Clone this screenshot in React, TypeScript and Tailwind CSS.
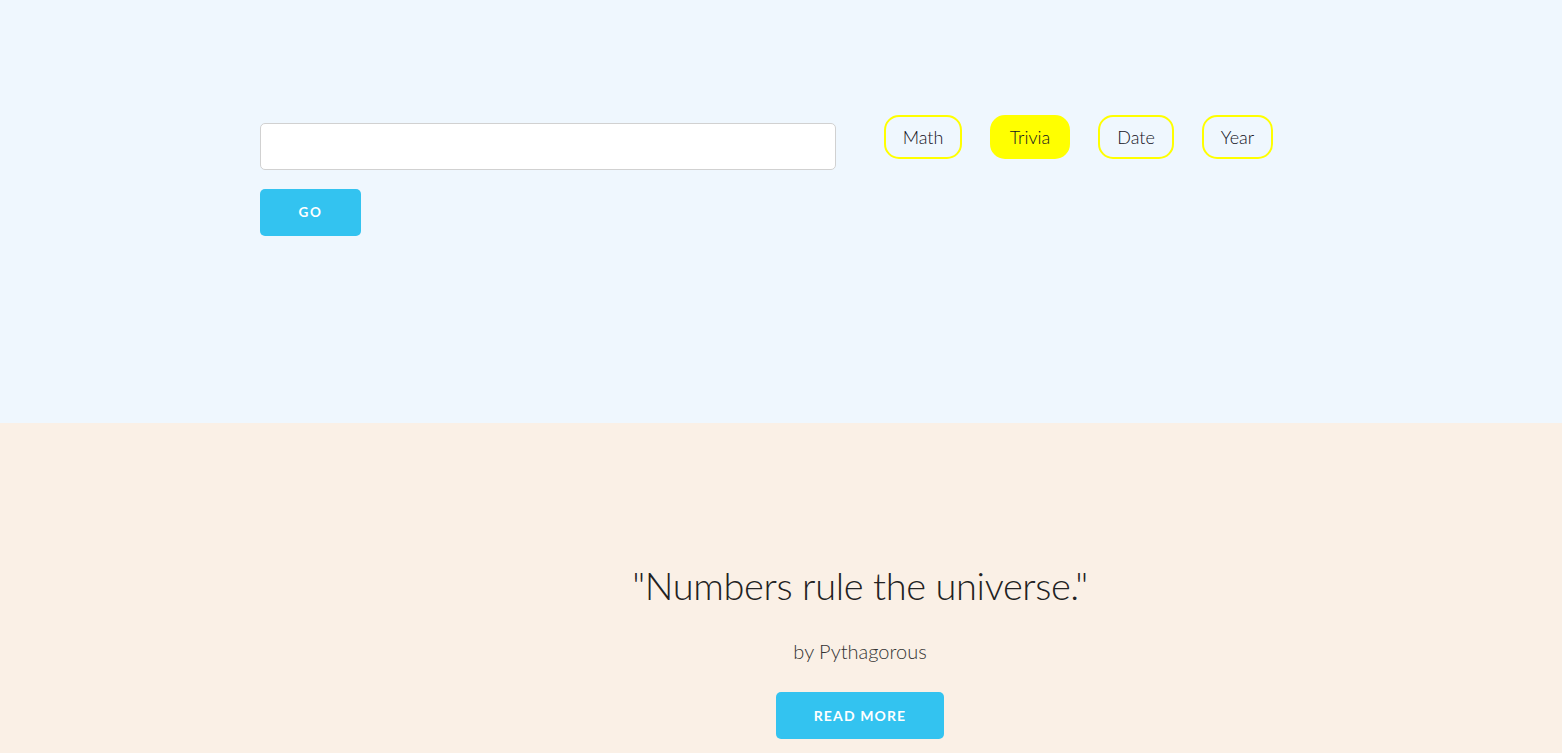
export default function App() {
  const topics = [
    { label: "Math", width: "w-[78px]", active: false },
    { label: "Trivia", width: "w-[80px]", active: true },
    { label: "Date", width: "w-[76px]", active: false },
    { label: "Year", width: "w-[71px]", active: false },
  ];

  return (
    <div className="min-h-screen font-['Lato','Open_Sans',sans-serif] text-[#222]">
      <section className="h-[423px] bg-[#eff7fe]">
        <div className="flex pl-[260px] pt-[115px]">
          <div className="w-[576px] pt-[8px]">
            <input
              type="text"
              className="block h-[47px] w-full rounded-[5px] border border-[#d1d1d1] bg-white px-3 outline-none"
            />
            <button className="mt-[19px] h-[47px] w-[101px] rounded-[5px] bg-[#33c3f0] text-[13.5px] font-bold uppercase tracking-[0.12em] text-white">
              Go
            </button>
          </div>

          {/* topic pills */}
          <div className="ml-[48px] flex gap-[28px]">
            {topics.map((t) => (
              <button
                key={t.label}
                className={`h-[44px] ${t.width} rounded-[15px] border-2 border-[#ffff00] text-[18px] font-light text-[#111122] ${
                  t.active ? "bg-[#ffff00]" : "bg-transparent"
                }`}
              >
                {t.label}
              </button>
            ))}
          </div>
        </div>
      </section>

      <section className="flex min-h-[330px] flex-col items-center bg-[#faf0e6] pl-[158px] pt-[139px]">
        <h1 className="text-[38px] font-light leading-[46px] tracking-[-0.01em] text-[#222]">
          "Numbers rule the universe."
        </h1>
        <p className="mt-[28px] text-[20px] font-light text-[#333]">
          by Pythagorous
        </p>
        <button className="mt-[26px] h-[47px] w-[168px] rounded-[5px] bg-[#33c3f0] text-[14px] font-bold uppercase tracking-[0.08em] text-white">
          Read More
        </button>
      </section>
    </div>
  );
}
